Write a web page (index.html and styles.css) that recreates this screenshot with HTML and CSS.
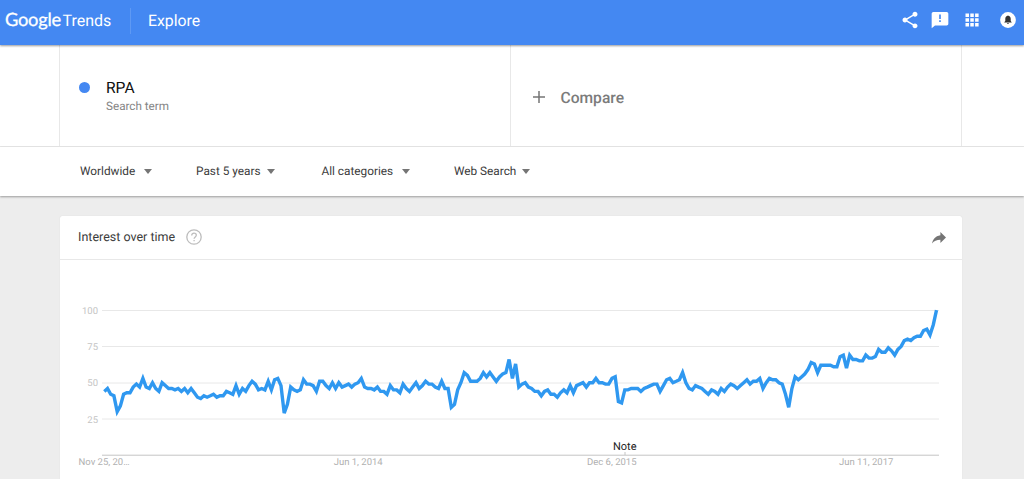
FILE: index.html
```html
<!DOCTYPE html>
<html lang="en">
<head>
  <meta charset="UTF-8" />
  <meta name="viewport" content="width=device-width, initial-scale=1.0"/>
  <title>RPA - Explore - Google Trends</title>
  <link rel="stylesheet" href="styles.css">
</head>
<body>

  <header>
    <div class="logo"><span class="google">Google</span><span class="trends">Trends</span></div>
    <div class="page-name">Explore</div>
    <div class="header-icons">
      <svg class="share" width="20" height="20" viewBox="0 0 24 24"><path d="M18 16.1c-.8 0-1.4.3-2 .8l-7.100-4.200c.1-.2.1-.5.1-.7s0-.5-.1-.7L15.900 7.200c.6.500 1.300.8 2.100.8 1.700 0 3-1.300 3-3s-1.300-3-3-3-3 1.300-3 3c0 .2 0 .5.1.7L8 9.800C7.500 9.300 6.800 9 6 9c-1.700 0-3 1.300-3 3s1.300 3 3 3c.8 0 1.500-.3 2-.8l7.100 4.200c0 .2-.1.400-.1.600 0 1.600 1.300 2.900 3 2.900s3-1.300 3-2.900-1.300-2.900-3-2.900z"/></svg>
      <svg class="feedback" width="20" height="20" viewBox="0 0 24 24"><path d="M20 2.500H4c-1.100 0-2 .9-2 2V22l4-3.500h14c1.100 0 2-.9 2-2v-12c0-1.100-.9-2-2-2zm-7 12h-2v-2.200h2v2.200zm0-3.800h-2V5.500h2v5.200z"/></svg>
      <svg class="apps" width="14" height="14" viewBox="0 0 14 14"><path d="M.5.500h3.500V4H.5zM5.300.5h3.500V4H5.300zM10.100.5h3.500V4h-3.500zM.5 5.300h3.500v3.500H.5zM5.300 5.300h3.500v3.500H5.300zM10.100 5.300h3.500v3.500h-3.500zM.5 10.100h3.500v3.500H.5zM5.300 10.100h3.500v3.500H5.300zM10.100 10.100h3.500v3.500h-3.500z"/></svg>
      <svg class="bell" width="16" height="16" viewBox="0 0 16 16"><circle cx="8" cy="8" r="7.900"/><path d="M8 3.400c-.5 0-.8.300-.8.700-1.200.3-1.900 1.300-1.900 2.600v2.400l-1 1.100v.4h7.400v-.4l-1-1.100V6.700c0-1.300-.7-2.300-1.900-2.600 0-.4-.3-.7-.8-.7zM7.100 11.100h1.800c0 .5-.4.9-.9.9s-.9-.4-.9-.9z" fill="#333"/></svg>
    </div>
  </header>

  <div class="terms">
    <div class="term">
      <span class="dot"></span>
      <div>
        <div class="term-title">RPA</div>
        <div class="term-type">Search term</div>
      </div>
    </div>
    <div class="compare">
      <svg width="12" height="12" viewBox="0 0 12 12"><path d="M6 0v12M0 6h12" stroke="#757575" stroke-width="1.500"/></svg>
      <span>Compare</span>
    </div>
  </div>

  <nav class="filters">
    <div class="filter worldwide">Worldwide<i></i></div>
    <div class="filter years">Past 5 years<i></i></div>
    <div class="filter categories">All categories<i></i></div>
    <div class="filter search">Web Search<i></i></div>
  </nav>

  <div class="card">
    <div class="card-header">
      <span class="card-title">Interest over time</span>
      <svg class="help" width="16" height="16" viewBox="0 0 16 16"><circle cx="8" cy="8" r="7.200"/><path d="M5.700 6.400c0-1.400 1-2.200 2.300-2.200s2.300.9 2.300 2.100c0 1.600-2.200 1.700-2.200 3.500M8.100 10.900v1.300"/></svg>
      <svg class="export" width="14" height="12" viewBox="0 0 14 12"><path d="M8.400 3.200V0L14 5.500l-5.600 5.400V7.700C4.600 7.700 2 8.800 0 11.600c.7-4 3.200-7.700 8.400-8.400z"/></svg>
    </div>
    <!-- Chart: one point per week, value 0-100 -->
    <svg class="chart" width="902" height="240" viewBox="60 260 902 240">
      <g class="grid">
        <path d="M102 310.500H939M102 346.500H939M102 383H939M102 419H939"/>
      </g>
      <path class="axis" d="M102 455.200H939M625 452v3"/>
      <g class="y-labels">
        <text x="98" y="313.500">100</text>
        <text x="98" y="350">75</text>
        <text x="98" y="386">50</text>
        <text x="98" y="422.500">25</text>
      </g>
      <g class="x-labels">
        <text x="78.500" y="465.300">Nov 25, 20…</text>
        <text x="333.700" y="465.300">Jun 1, 2014</text>
        <text x="587" y="465.300">Dec 6, 2015</text>
        <text x="839" y="465.300">Jun 11, 2017</text>
      </g>
      <text class="note" x="613" y="450">Note</text>
      <polyline id="line"/>
    </svg>
  </div>

  <script>
    const values = [
      44,46,42,41,30,34,42,43,43,47,49,47,53,47,46,50,46,44,50,48,
      46,46,45,46,44,46,43,46,43,40,39,41,40,41,42,40,41,41,44,43,
      42,48,42,46,44,48,51,49,45,46,45,51,45,52,53,48,29,35,47,45,
      44,45,52,49,49,48,44,51,51,48,46,50,46,50,47,48,49,47,49,50,
      53,47,46,46,45,47,44,44,42,48,45,45,43,49,46,44,47,50,46,48,
      51,49,49,47,46,51,46,46,33,35,45,50,57,55,51,51,51,53,57,54,
      57,54,51,54,56,57,66,53,63,47,49,50,47,46,44,44,41,44,45,42,
      42,40,43,45,43,48,43,48,49,50,47,50,50,53,50,50,49,49,53,54,
      37,36,45,45,46,46,46,44,46,47,48,49,49,44,48,52,53,50,51,52,
      57,50,46,45,48,47,46,44,42,45,44,42,46,44,47,49,48,46,48,50,
      52,49,51,51,53,46,50,53,52,52,50,49,42,33,46,54,52,54,56,59,
      64,63,57,62,62,62,62,61,61,68,69,60,69,66,66,65,65,69,67,67,
      68,73,71,71,74,72,69,73,75,79,80,79,81,82,82,86,87,83,90,100
    ];
    const points = values.map((v, i) => (104.3 + i * 3.213).toFixed(1) + "," + (455.2 - v * 1.45).toFixed(1));
    document.getElementById("line").setAttribute("points", points.join(" "));
  </script>
</body>
</html>
```
FILE: styles.css
```css
* {
  box-sizing: border-box;
}
body {
  margin: 0;
  height: 479px;
  overflow: hidden;
  font-family: Roboto, sans-serif;
  text-rendering: geometricPrecision;
  background: #ededed;
  color: #3c3c3c;
}
header {
  position: relative;
  height: 45px;
  padding-right: 8px;
  background: #4488f2;
  color: #fff;
  display: flex;
  align-items: center;
  box-shadow: 0 1px 2px rgba(0,0,0,0.4);
}
.logo {
  width: 131px;
  height: 26px;
  padding-left: 5px;
  margin-top: -3px;
  border-right: 1px solid #5e99f4;
  display: flex;
  align-items: baseline;
  line-height: 22px;
}
.google {
  width: 57.5px;
  font-family: Lato, sans-serif;
  font-size: 18.3px;
  -webkit-text-stroke: 0.3px #fff;
  letter-spacing: -0.25px;
}
.trends {
  font-size: 16px;
}
.page-name {
  margin: -5px 0 0 17px;
  font-size: 15.8px;
}
.header-icons {
  margin: -5px 0 0 auto;
  display: flex;
  align-items: center;
  fill: #fff;
}
.feedback {
  margin-left: 10px;
}
.apps {
  margin-left: 15px;
}
.bell {
  margin-left: 21px;
}

.terms {
  height: 102px;
  padding-left: 59px;
  background: #fff;
  border-bottom: 1px solid #e8e8e8;
  display: flex;
}
.term {
  width: 451px;
  padding: 34px 0 0 19px;
  border-left: 1px solid #e8e8e8;
  display: flex;
}
.dot {
  width: 11px;
  height: 11px;
  margin: 3px 16px 0 0;
  border-radius: 50%;
  background: #4488f2;
}
.term-title {
  color: #111;
  font-size: 15.6px;
  line-height: 19px;
}
.term-type {
  margin-top: 1px;
  color: #858585;
  font-size: 11.7px;
  line-height: 15px;
}
.compare {
  width: 452px;
  padding: 3px 0 0 22px;
  border: solid #e8e8e8;
  border-width: 0 1px;
  display: flex;
  align-items: center;
  color: #7b7b7b;
  font-size: 15.6px;
  font-weight: 500;
}
.compare span {
  margin: 1px 0 0 15.5px;
}

.filters {
  position: relative;
  height: 49px;
  padding: 0 0 1px 80px;
  background: #fff;
  box-shadow: 0 1px 2px rgba(0,0,0,0.35);
  display: flex;
  align-items: center;
  font-size: 11.8px;
}
.filter {
  display: flex;
  align-items: center;
  justify-content: space-between;
}
.filter i {
  border: 4px solid transparent;
  border-top: 5px solid #757575;
  border-bottom: 0;
}
.worldwide {
  width: 72px;
  margin-right: 44px;
}
.years {
  width: 79px;
  margin-right: 46.5px;
}
.categories {
  width: 88.5px;
  margin-right: 44px;
}
.search {
  width: 76px;
}

.card {
  width: 902px;
  margin: 20px 0 0 60px;
  background: #fff;
  border-radius: 2px;
  box-shadow: 0 0 1px rgba(0,0,0,0.15);
}
.card-header {
  height: 44px;
  padding: 0 16px 1px 18px;
  border-bottom: 1px solid #e8e8e8;
  display: flex;
  align-items: center;
}
.card-title {
  width: 97px;
  font-size: 12.5px;
  white-space: nowrap;
}
.help {
  margin-left: 11px;
  fill: none;
  stroke: #bdbdbd;
  stroke-width: 1.3;
}
.export {
  margin-left: auto;
  margin-top: 2px;
  fill: #757575;
}

/* Chart */
.chart {
  display: block;
}
.grid path {
  stroke: #e8e8e8;
}
.axis {
  stroke: #c4c4c4;
  fill: none;
}
.y-labels {
  fill: #c4c4c4;
  font-size: 9.5px;
  text-anchor: end;
}
.x-labels {
  fill: #b0b0b0;
  font-size: 9.5px;
}
.note {
  fill: #222;
  font-size: 11px;
}
#line {
  fill: none;
  stroke: #2f98f0;
  stroke-width: 3.4;
}
```
